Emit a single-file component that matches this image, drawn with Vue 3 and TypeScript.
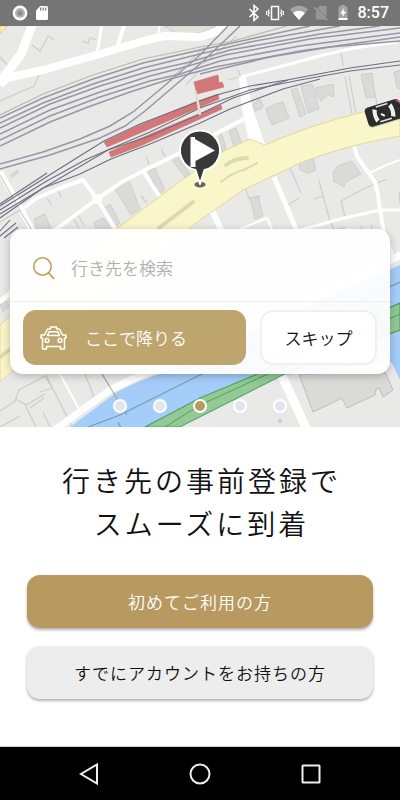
<script setup lang="ts">
import { ref } from 'vue'

const query = ref('')
const slides = [0, 1, 2, 3, 4]
const current = ref(2)

// Upper rail yard, drawn as wide grey-violet lines
const yardTracks: string[] = [
  '0,118 43,98 93,79 143,63 200,50 255,38 310,26',
  '0,123 43,103 93,84 143,68 200,54 250,42 340,26',
  '0,128 50,104 100,86 150,71 190,62 230,50 320,34 380,26',
  '0,134 50,110 100,92 150,76 185,67 225,55 310,39 400,28',
  '0,140 50,116 100,97 150,81 180,74 220,61 300,46 400,33',
  '0,146 50,122 88,107 130,92 170,79 215,67 300,51 400,37',
  '200,74 220,69 270,57 330,47 400,41',
  '0,164 43,152 80,139 110,126 133,112 163,87 200,55 228,26',
  '0,169 50,155 100,138 125,126 145,111 200,64 240,26',
]

// Main line through the station
const mainTracks: string[] = [
  '0,204 47,173',
  '0,206 40,181 75,159 104,141 140,124 197,102 220,94 250,86 287,80 350,68 400,61',
  '0,210 45,182 85,160 110,149 150,132 200,108 250,90 300,80 350,71 400,65',
  '0,214 50,184 108,150 150,136 200,114 233,98 288,80',
  '0,218 43,188 80,174 111,159 150,144 200,123 230,109 283,89 320,79',
  '0,236 16,223', '0,231 10,220', '4,238 18,227',
]

const localRoads: { points: string; width: number }[] = [
  { points: '34,20 21,54 0,82', width: 9 },
  { points: '0,85 7,78 43,70 100,54 147,40 165,36 200,37 216,32 230,20', width: 8 },
  { points: '102,24 97,54', width: 3 },
  { points: '125,22 117,48', width: 4 },
  { points: '160,24 158,34', width: 2 },
  { points: '241,77 290,64 323,55 355,48 397,42', width: 3 },
  { points: '0,172 20,207 34,234', width: 6 },
  { points: '24,208 35,199 60,188 83,180 97,199 116,230', width: 4 },
  { points: '52,232 70,219 97,199 122,182 143,171 180,153 213,135 246,118', width: 4 },
  { points: '143,171 160,197', width: 4 },
  { points: '274,177 299,236', width: 5 },
  { points: '211,208 224,236', width: 6 },
  { points: '240,229 267,218 275,236', width: 2 },
  { points: '290,233 340,219 380,210 400,210', width: 3 },
  { points: '354,146 357,156 365,168 375,182 378,195 380,210 384,232 393,258 400,253', width: 4 },
  { points: '370,173 386,165 400,160', width: 2 },
  { points: '0,302 14,290', width: 5 },
  { points: '55,430 82,410 110,390 130,380 170,364 400,256', width: 7 },
  { points: '60,374 79,409', width: 2 },
  { points: '282,376 307,430', width: 9 },
]

const buildings: string[] = [
  '253,104 260,99 263,106 261,109 255,111',
  '266,109 275,104 283,102 289,118 272,125 268,116',
  '291,90 297,88 306,114 300,117',
  '301,86 312,84 319,109 308,113',
  '315,88 333,84 334,97 328,95 321,101 317,97',
  '361,75 372,73 375,97 366,98',
  '394,72 402,70 402,90 397,88',
  '299,163 313,158 316,170 308,173 300,170',
  '333,172 338,166 352,161 361,174 346,182 344,187 338,183 334,182',
  '250,198 258,196 263,216 255,219',
  '229,131 236,128 242,144 234,147',
  '219,136 222,134 226,149 222,151',
  '115,189 129,180 140,209 131,215',
  '148,171 155,168 165,190 159,194',
  '172,160 177,156 190,174 185,177',
  '104,208 110,204 120,223 114,227',
  '34,219 45,214 52,232 37,232',
  '94,222 104,218 112,230 97,232',
  '299,374 313,412 342,398 347,408 375,395 376,389 379,388 383,397 393,390 385,372',
  '0,305 6,301 9,306 3,312',
]

const plotLines: string[] = [
  '32,45 40,51 48,36 54,40', '82,41 88,43 90,38 97,40', '0,57 8,66', '0,101 34,86 39,75',
  '345,77 352,114', '349,76 356,113', '371,75 377,104', '341,52 343,66', '228,80 239,77', '238,70 242,80',
  '146,156 149,164', '161,149 165,157', '47,198 52,205', '58,190 61,197', '73,218 79,228', '78,215 84,225',
  '141,196 147,203', '290,168 301,193', '288,205 299,198', '319,181 330,221', '314,199 323,196',
  '345,217 341,201 365,188 387,179', '245,188 250,200 260,196', '331,222 334,230 346,227', '361,226 364,236 373,233 371,225',
  '399,192 400,203', '10,176 18,170', '11,178 19,171',
  '0,411 15,401 19,390 45,376', '16,399 26,405 45,394', '45,376 52,388 40,392', '25,405 36,427', '30,408 44,398',
  '43,412 50,427', '85,374 94,397', '0,427 20,416', '46,375 57,397 72,427', '193,425 199,421 206,427',
]
</script>

<template>
  <div class="screen">
    <header class="status">
      <div class="status-group left">
        <svg width="16" height="16" viewBox="0 0 16 16" aria-hidden="true">
          <circle cx="8" cy="8" r="7.4" fill="#fff" />
          <circle cx="8" cy="8" r="5" fill="#b4b4b4" />
          <circle cx="8" cy="8" r="2.8" fill="#8e8e8e" />
        </svg>
        <svg width="12" height="16" viewBox="0 0 12 16" aria-hidden="true">
          <path d="M4.3 1H10.5Q12 1 12 2.500V13.500Q12 15 10.500 15H1.500Q0 15 0 13.500V5.500Z" fill="#fff" />
          <path d="M4.700 2.500V5.500M7.200 2.500V5.500M9.700 2.500V5.500" stroke="#757575" stroke-width="1.200" />
        </svg>
      </div>
      <div class="status-group right">
        <svg width="12" height="18" viewBox="0 0 12 18" aria-hidden="true">
          <path d="M1.500 5L10 13L6 16.500V1.500L10 5L1.500 13" fill="none" stroke="#fff" stroke-width="1.500" />
        </svg>
        <svg width="18" height="18" viewBox="0 0 18 18" aria-hidden="true">
          <rect x="5.500" y="2.500" width="7" height="13" fill="none" stroke="#fff" stroke-width="1.500" />
          <path d="M3.300 5.500L2 7.500L3.300 9L2 10.500L3.300 12.500M14.700 5.500L16 7.500L14.700 9L16 10.500L14.700 12.500" fill="none" stroke="#fff" stroke-width="1.200" />
          <path d="M.6 7V11M17.400 7V11" stroke="#fff" />
        </svg>
        <svg width="18" height="16" viewBox="0 0 18 16" aria-hidden="true">
          <path d="M0 4.500Q9-3 18 4.500L9 15Z" fill="#a5a5a5" />
          <path d="M3 8Q9 3.500 15 8L9 15Z" fill="#fff" />
        </svg>
        <svg width="14" height="16" viewBox="0 0 14 16" aria-hidden="true">
          <path d="M5.500 1H12.500V14.500H2V4.500Z" fill="#979797" />
          <path d="M0 1.500L13.500 15" stroke="#757575" stroke-width="2.400" />
          <path d="M.5 2.500L13 15" stroke="#a5a5a5" stroke-width="1.200" />
        </svg>
        <svg class="battery" width="10" height="16" viewBox="0 0 10 16" aria-hidden="true">
          <path d="M3 0H7V1.500H9.500V15H.5V1.500H3Z" fill="#a5a5a5" />
          <path d="M.5 13H9.500V15H.5Z" fill="#fff" />
          <path d="M6 3L2.300 8.500H4.500V12L8 6.800H5.700Z" fill="#fff" />
        </svg>
        <time>8:57</time>
      </div>
    </header>

    <section class="preview">
      <svg class="map" viewBox="0 26 400 401" preserveAspectRatio="xMidYMin slice" aria-hidden="true">
        <rect y="26" width="400" height="401" fill="#e9e9e8" />
        <path d="M164 26L180 35L200 33L216 26Z" fill="#e1e2dc" stroke="#c5c5bf" stroke-width=".7" />
        <path d="M0 26H7L0 34Z" fill="#faf6c3" stroke="#e8c77d" />

        <g fill="none" stroke="#cdcdcd" stroke-width="1.200">
          <polyline v-for="line in plotLines" :key="line" :points="line" />
        </g>
        <g fill="#dadbd7" stroke="#c9c9c7" stroke-width=".8">
          <polygon v-for="shape in buildings" :key="shape" :points="shape" />
        </g>

        <path d="M70 427L117 392Q140 380 160 374L300 310L400 265V380L386 362L280 380L180 427Z" fill="#a5cdfa" />
        <path d="M180 427L283 375L322 357L400 330V303L340 330L255 375L200 398L145 427Z" fill="#95c896" stroke="#45a75a" stroke-width="1.200" />
        <path d="M165 427L200 405L270 373L400 314" fill="none" stroke="#45a75a" />
        <path d="M80 430L120 415L200 375L400 282M102 374L127 415M118 422L122 430" fill="none" stroke="#7d9cac" stroke-width="1.200" />
        <path d="M180 427.500L283 375.500L386 362L372 350L392 363L400 380V427.500Z" fill="#e9e9e8" />
        <polygon class="hall" :points="buildings[18]" />
        <circle cx="280" cy="421" r="1.500" fill="none" stroke="#bbb" />

        <g fill="none" stroke="#fff" stroke-linejoin="round">
          <polyline v-for="road in localRoads" :key="road.points" :points="road.points" :stroke-width="road.width" />
        </g>
        <circle cx="97" cy="199" r="5" fill="#fff" />
        <path d="M239 77L245 75L253 110L266 147H250L242 110Z" fill="#fff" />
        <path d="M102 374L118 400" stroke="#b3b5a2" stroke-width="1.200" />

        <path
          d="M0 325L115 230L193 172L220 153L250 139L265 145Q310 125 363 112L400 105V136Q375 140 353 146Q325 153 300 163L243 190L200 220L175 240L10 373L0 382Z"
          fill="#f9f7c9" stroke="#ecd49a" />
        <g fill="none" stroke="#dcdbb0" stroke-linecap="round">
          <path d="M159 228L193 202M0 357L12 348" stroke-width="4" />
          <path d="M226 165Q235 158 247 158" stroke-width="4" />
          <path d="M221 182Q235 171 244 170L257 163" stroke-width="2" />
        </g>

        <path d="M0 115L43 94L93 75L143 59L200 47L233 41L287 26" fill="none" stroke="#b9baa0" stroke-width="1.200" />
        <path d="M0 175L22 214L33 232M0 222L20 210M170 79L205 47M186 85L200 70M203 64L237 36" fill="none" stroke="#bfc0b5" />
        <g fill="none" stroke="#9896a7" stroke-width="1.500">
          <polyline v-for="track in yardTracks" :key="track" :points="track" />
        </g>
        <g fill="#d47778" stroke="#c86d70" stroke-width=".6">
          <path d="M104 142L107 147L140 133L219 99L218 94L198 101L140 125Z" />
          <path d="M109 152L111 157L140 146L222 109L221 105L167 127Z" />
          <path d="M194 82L218 75L219 83L222 82L224 87L197 94Z" />
        </g>
        <g fill="none" stroke="#6f6d80" stroke-width="1.100">
          <polyline v-for="track in mainTracks" :key="track" :points="track" />
        </g>
        <path d="M195 91L198 103L200 115" fill="none" stroke="#dfe3cd" stroke-width="2.500" />

        <g transform="translate(382 113.500) rotate(-17)">
          <rect x="-16" y="-9" width="36" height="20" rx="4" fill="#777" opacity=".35" />
          <rect x="-16" y="-10" width="36" height="20" rx="4" fill="#2c2c2c" />
          <path d="M-8-7Q-10 0-8 7L-4 5Q-6 0-4-5ZM8-5Q10 0 8 5L12 7Q14 0 12-7Z" fill="#eee" />
          <path d="M-4-8H8M-4 7.500H8" stroke="#e5e5e5" stroke-width="1.500" />
          <path d="M17-9L20-6M20 5V8" stroke="#d8435a" stroke-width="2" />
          <path d="M-1 0L2 3" stroke="#fff" stroke-width="2" />
        </g>

        <ellipse cx="200" cy="184.500" rx="5.500" ry="3" fill="#666759" />
        <path d="M200 184L195.500 170A20 20 0 1 1 204.500 170Z" fill="#393939" stroke="#fff" stroke-width="2" stroke-linejoin="round" />
        <path d="M190.500 137H195V139L215 150.500L195.500 161V167H190.500Z" fill="#fff" />
      </svg>

      <form class="card" @submit.prevent>
        <div class="search">
          <svg width="24" height="24" viewBox="0 0 24 24" aria-hidden="true">
            <circle cx="10.500" cy="10.500" r="8.700" fill="none" stroke="#c09a52" stroke-width="1.500" />
            <path d="M16.700 17L22 23" stroke="#c09a52" stroke-width="1.800" />
          </svg>
          <input v-model="query" type="text" placeholder="行き先を検索" aria-label="行き先を検索" />
        </div>
        <div class="actions">
          <button class="here" type="button">
            <svg width="27" height="26" viewBox="0 0 27 26" fill="none" stroke="#fff" stroke-width="1.500" stroke-linejoin="round" aria-hidden="true">
              <path d="M1 10H4.500L7 5Q7.500 4 8.500 4H10.500V2H16.500V4H18.500Q19.500 4 20 5L22.500 10H26V13H24.500V24H20.500V21.500H6.500V24H2.500V13H1Z" />
              <path d="M9 6.800H18L19.500 10.500H7.500Z" />
              <circle cx="7" cy="15.500" r="1.900" />
              <circle cx="20" cy="15.500" r="1.900" />
            </svg>
            <span>ここで降りる</span>
          </button>
          <button class="skip" type="button">スキップ</button>
        </div>
      </form>

      <nav class="dots" aria-label="スライド">
        <button
          v-for="slide in slides"
          :key="slide"
          type="button"
          class="dot"
          :class="{ active: slide === current }"
          :aria-label="String(slide + 1)"
          @click="current = slide"
        ></button>
      </nav>
    </section>

    <main class="intro">
      <h1>行き先の事前登録で<br />スムーズに到着</h1>
      <button class="wide primary" type="button">初めてご利用の方</button>
      <button class="wide secondary" type="button">すでにアカウントをお持ちの方</button>
    </main>

    <footer class="system">
      <button type="button" aria-label="戻る">
        <svg width="22" height="24" viewBox="0 0 22 24"><path d="M19 2.500V21.500L3 12Z" /></svg>
      </button>
      <button type="button" aria-label="ホーム">
        <svg width="24" height="24" viewBox="0 0 24 24"><circle cx="12" cy="12" r="9.500" /></svg>
      </button>
      <button type="button" aria-label="履歴">
        <svg width="22" height="22" viewBox="0 0 22 22"><rect x="2.500" y="2.500" width="17" height="17" rx=".5" /></svg>
      </button>
    </footer>
  </div>
</template>

<style>
body {
  background: #fff;
}
</style>

<style scoped>
.screen {
  display: flex;
  flex-direction: column;
  min-height: 100vh;
  font-family: "Noto Sans CJK JP", sans-serif;
  font-weight: 350;
  color: #111;
  background: #fff;
}

.screen svg {
  display: block;
  flex: none;
}

button,
input {
  margin: 0;
  padding: 0;
  border: 0;
  font: inherit;
  color: inherit;
  background: none;
}

button {
  cursor: pointer;
}

.status {
  display: flex;
  align-items: center;
  justify-content: space-between;
  height: 26px;
  padding: 0 11px 0 12px;
  color: #fff;
  background: #757575;
}

.status-group {
  display: flex;
  align-items: center;
}

.left {
  gap: 8px;
}

.right {
  gap: 6px;
}

.right time {
  margin-left: 4px;
  font: 500 16px/26px Roboto, sans-serif;
}

.battery {
  margin-left: 4px;
}

.preview {
  position: relative;
  padding: 203px 10px 14px;
  overflow: hidden;
}

.map {
  position: absolute;
  inset: 0;
  width: 100%;
  height: 100%;
}

.hall {
  fill: #dadbd7;
  stroke: #bdbdbb;
}

.card {
  position: relative;
  border-radius: 13px;
  background: rgba(255, 255, 255, 0.93);
  box-shadow: 0 2px 8px rgba(0, 0, 0, 0.25);
}

.search {
  display: flex;
  align-items: center;
  gap: 15px;
  height: 73px;
  padding: 5px 22px 0;
  border-bottom: 1px solid #eee;
  box-sizing: border-box;
}

.search input {
  flex: 1;
  min-width: 0;
  height: 40px;
  font-size: 17px;
  outline: none;
}

.search input::placeholder {
  color: #b0b0b0;
  opacity: 1;
}

.actions {
  display: grid;
  grid-template-columns: 223fr 117fr;
  gap: 14px;
  padding: 8px 13px 9px;
}

.actions button {
  height: 55px;
  border-radius: 13px;
  font-size: 17px;
}

.here {
  display: flex;
  align-items: center;
  gap: 18px;
  padding-left: 17px;
  color: #fff;
  background: #bea46d;
}

.actions .skip {
  border: 2px solid #f0f0f0;
  color: #111;
  background: #fff;
}

.dots {
  position: relative;
  display: flex;
  justify-content: center;
  gap: 26px;
  margin-top: 25px;
}

.dot {
  width: 14px;
  height: 14px;
  border: 2px solid #fff;
  border-radius: 50%;
  background: #e2e5ef;
}

.dot.active {
  background: #b8995f;
}

.intro {
  display: flex;
  flex: 1;
  flex-direction: column;
  gap: 18px;
  padding: 32px 27px 24px;
}

h1 {
  margin: 0 0 12px;
  padding-left: 3px;
  font-size: 28px;
  font-weight: 350;
  line-height: 43px;
  letter-spacing: 3px;
  text-align: center;
}

.wide {
  height: 53px;
  border-radius: 13px;
  font-size: 17px;
  letter-spacing: 1px;
  box-shadow: 0 2px 3px rgba(0, 0, 0, 0.3);
}

.primary {
  color: #fff;
  background: #b89a61;
}

.secondary {
  background: #ededed;
}

.system {
  display: grid;
  grid-template-columns: repeat(3, 1fr);
  height: 53px;
  padding: 0 33px;
  border-top: 1px solid #ccc;
  background: #000;
}

.system button {
  display: flex;
  align-items: center;
  justify-content: center;
}

.system svg {
  fill: none;
  stroke: #eee;
  stroke-width: 2px;
}
</style>
